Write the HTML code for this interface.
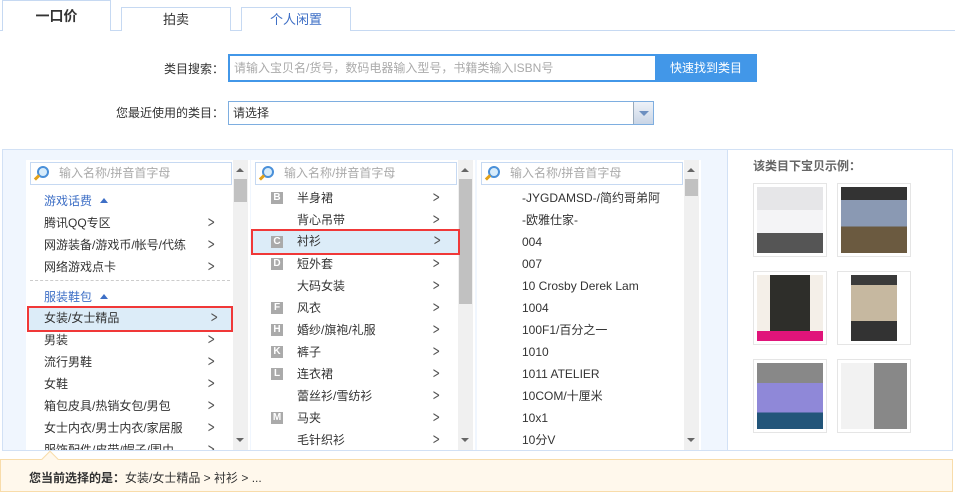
<!DOCTYPE html>
<html><head><meta charset="utf-8"><style>
*{margin:0;padding:0;box-sizing:border-box}
body{width:955px;height:492px;overflow:hidden;background:#fff;font-family:"Liberation Sans","Noto Sans CJK SC",sans-serif;font-size:12px;color:#333;position:relative}
.a{position:absolute}
.tab{position:absolute;border:1px solid #c6d9f2;border-bottom:none;background:#fff;text-align:center;font-size:13px}
.lbl{position:absolute;text-align:right;font-size:12px;color:#333}
.col{position:absolute;top:160px;width:224px;height:290px;background:#fff;overflow:hidden}
.sb{position:absolute;left:4px;top:2px;width:202px;height:23px;border:1px solid #c6d9f2;background:#fff;color:#aaa;font-size:12px;line-height:21px;padding-left:28px}
.sb i{position:absolute;left:6px;top:3px;width:12px;height:12px;border:2px solid #4a90d9;border-radius:50%;background:#d7ecfb}
.sb b{position:absolute;left:3px;top:13px;width:6px;height:3px;background:#e3a21a;transform:rotate(-45deg)}
.scr{position:absolute;right:2px;top:0;width:15px;height:290px;background:#f0f0f0}
.scr .t{position:absolute;left:1px;top:19px;width:13px;background:#c1c1c1}
.up{position:absolute;left:3px;top:8px;border:4px solid transparent;border-bottom:4px solid #666;border-top:none}
.dn{position:absolute;left:3px;bottom:8px;border:4px solid transparent;border-top:4px solid #666;border-bottom:none}
.r{position:absolute;left:0;width:205px;height:22px;line-height:22px;font-size:12px;color:#333}
.r .ar{position:absolute;right:13px;top:0;color:#555;font-family:"DejaVu Sans",sans-serif;font-size:15px;transform:scaleX(.6);line-height:21px}
.r .bd{position:absolute;left:20px;top:5px;width:12px;height:12px;background:#aaa;color:#fff;font-size:10px;line-height:12px;text-align:center;font-weight:bold}
.h{color:#3e6fc6}
.h:after{content:"";display:inline-block;margin-left:8px;vertical-align:2px;border:4px solid transparent;border-bottom:5px solid #3e6fc6;border-top:none}
.sel{background:#dcecf8;outline:2px solid #f03838;outline-offset:-1px}
.img{position:absolute;width:74px;height:74px;border:1px solid #e5e5e5;padding:3px;background:#fff}
.img div{width:100%;height:100%}
</style></head><body>
<div class="a" style="left:0;top:30px;width:955px;height:1px;background:#c6d9f2"></div>
<div class="tab" style="left:2px;top:0;width:109px;height:31px;line-height:30px;font-weight:bold;font-size:14px">一口价</div>
<div class="tab" style="left:121px;top:7px;width:110px;height:24px;line-height:24px">拍卖</div>
<div class="tab" style="left:241px;top:7px;width:110px;height:24px;line-height:24px;color:#3e6fc6">个人闲置</div>

<div class="lbl" style="left:100px;top:60px;width:124px">类目搜索：</div>
<div class="a" style="left:228px;top:54px;width:429px;height:28px;border:2px solid #4297e8;background:#fff;color:#aaa;line-height:24px;padding-left:4px">请输入宝贝名/货号，数码电器输入型号，书籍类输入ISBN号</div>
<div class="a" style="left:655px;top:54px;width:102px;height:28px;background:#4297e8;color:#fff;line-height:28px;text-align:center">快速找到类目</div>

<div class="lbl" style="left:80px;top:104px;width:144px">您最近使用的类目：</div>
<div class="a" style="left:228px;top:101px;width:426px;height:24px;border:1px solid #7eaee0;background:#fff;line-height:22px;padding-left:4px">请选择</div>
<div class="a" style="left:633px;top:102px;width:20px;height:22px;background:linear-gradient(#eef2f8,#c9d5e6);border-left:1px solid #9ab">
<div class="a" style="left:5px;top:9px;border:5px solid transparent;border-top:5px solid #6c8fc0;border-bottom:none"></div></div>

<div class="a" style="left:2px;top:149px;width:951px;height:302px;background:#f0f6fe;border:1px solid #d2e1f5"></div>
<div class="a" style="left:727px;top:150px;width:225px;height:300px;background:#fff;border-left:1px solid #d2e1f5"></div>

<!-- col1 -->
<div class="col" style="left:26px">
<div class="sb"><i></i><b></b>输入名称/拼音首字母</div>
<div class="scr"><div class="up"></div><div class="t" style="height:23px"></div><div class="dn"></div></div>
<div class="r h" style="top:30px;padding-left:18px">游戏话费</div>
<div class="r" style="top:52px;padding-left:18px">腾讯QQ专区<span class="ar">&gt;</span></div>
<div class="r" style="top:74px;padding-left:18px">网游装备/游戏币/帐号/代练<span class="ar">&gt;</span></div>
<div class="r" style="top:96px;padding-left:18px">网络游戏点卡<span class="ar">&gt;</span></div>
<div class="a" style="left:4px;top:120px;width:200px;border-top:1px dashed #ccc"></div>
<div class="r h" style="top:126px;padding-left:18px">服装鞋包</div>
<div class="r sel" style="top:147px;left:2px;width:204px;padding-left:16px;height:24px">女装/女士精品<span class="ar" style="right:11px">&gt;</span></div>
<div class="r" style="top:169px;padding-left:18px">男装<span class="ar">&gt;</span></div>
<div class="r" style="top:191px;padding-left:18px">流行男鞋<span class="ar">&gt;</span></div>
<div class="r" style="top:213px;padding-left:18px">女鞋<span class="ar">&gt;</span></div>
<div class="r" style="top:235px;padding-left:18px">箱包皮具/热销女包/男包<span class="ar">&gt;</span></div>
<div class="r" style="top:257px;padding-left:18px">女士内衣/男士内衣/家居服<span class="ar">&gt;</span></div>
<div class="r" style="top:279px;padding-left:18px">服饰配件/皮带/帽子/围巾<span class="ar">&gt;</span></div>
</div>

<!-- col2 -->
<div class="col" style="left:251px">
<div class="sb"><i></i><b></b>输入名称/拼音首字母</div>
<div class="scr"><div class="up"></div><div class="t" style="height:125px"></div><div class="dn"></div></div>
<div class="r" style="top:27px;padding-left:46px"><span class="bd">B</span>半身裙<span class="ar">&gt;</span></div>
<div class="r" style="top:49px;padding-left:46px">背心吊带<span class="ar">&gt;</span></div>
<div class="r sel" style="top:70px;left:1px;width:207px;padding-left:45px;height:24px"><span class="bd" style="left:19px;top:6px">C</span>衬衫<span class="ar" style="right:15px">&gt;</span></div>
<div class="r" style="top:93px;padding-left:46px"><span class="bd">D</span>短外套<span class="ar">&gt;</span></div>
<div class="r" style="top:115px;padding-left:46px">大码女装<span class="ar">&gt;</span></div>
<div class="r" style="top:137px;padding-left:46px"><span class="bd">F</span>风衣<span class="ar">&gt;</span></div>
<div class="r" style="top:159px;padding-left:46px"><span class="bd">H</span>婚纱/旗袍/礼服<span class="ar">&gt;</span></div>
<div class="r" style="top:181px;padding-left:46px"><span class="bd">K</span>裤子<span class="ar">&gt;</span></div>
<div class="r" style="top:203px;padding-left:46px"><span class="bd">L</span>连衣裙<span class="ar">&gt;</span></div>
<div class="r" style="top:225px;padding-left:46px">蕾丝衫/雪纺衫<span class="ar">&gt;</span></div>
<div class="r" style="top:247px;padding-left:46px"><span class="bd">M</span>马夹<span class="ar">&gt;</span></div>
<div class="r" style="top:269px;padding-left:46px">毛针织衫<span class="ar">&gt;</span></div>
</div>

<!-- col3 -->
<div class="col" style="left:477px">
<div class="sb"><i></i><b></b>输入名称/拼音首字母</div>
<div class="scr"><div class="up"></div><div class="t" style="height:17px"></div><div class="dn"></div></div>
<div class="r" style="top:27px;padding-left:45px">-JYGDAMSD-/简约哥弟阿</div>
<div class="r" style="top:49px;padding-left:45px">-欧雅仕家-</div>
<div class="r" style="top:71px;padding-left:45px">004</div>
<div class="r" style="top:93px;padding-left:45px">007</div>
<div class="r" style="top:115px;padding-left:45px">10 Crosby Derek Lam</div>
<div class="r" style="top:137px;padding-left:45px">1004</div>
<div class="r" style="top:159px;padding-left:45px">100F1/百分之一</div>
<div class="r" style="top:181px;padding-left:45px">1010</div>
<div class="r" style="top:203px;padding-left:45px">1011 ATELIER</div>
<div class="r" style="top:225px;padding-left:45px">10COM/十厘米</div>
<div class="r" style="top:247px;padding-left:45px">10x1</div>
<div class="r" style="top:269px;padding-left:45px">10分V</div>
</div>

<div class="a" style="left:753px;top:157px;font-weight:bold;color:#666;font-size:12px">该类目下宝贝示例：</div>
<div class="img" style="left:753px;top:183px"><div style="background:linear-gradient(#e6e6e8 0 35%,#f4f4f6 35% 70%,#555 70%)"></div></div>
<div class="img" style="left:837px;top:183px"><div style="background:linear-gradient(#333 0 20%,#8a99b3 20% 60%,#6b5a40 60%)"></div></div>
<div class="img" style="left:753px;top:271px"><div style="background:linear-gradient(90deg,#f4efe8 0 20%,#2e2e2a 20% 80%,#f4efe8 80%);border-bottom:10px solid #e0147a"></div></div>
<div class="img" style="left:837px;top:271px"><div style="margin:0 10px;width:46px;background:linear-gradient(#3a3a3a 0 15%,#c6b8a0 15% 70%,#333 70%)"></div></div>
<div class="img" style="left:753px;top:359px"><div style="background:linear-gradient(#888 0 30%,#8f88d8 30% 75%,#22557a 75%)"></div></div>
<div class="img" style="left:837px;top:359px"><div style="background:linear-gradient(90deg,#f2f2f2 0 50%,#888 50%)"></div></div>

<div class="a" style="left:0;top:459px;width:953px;height:33px;background:#fff8ec;border:1px solid #f8dcaa"></div>
<div class="a" style="left:44px;top:453px;width:12px;height:12px;background:#fff8ec;border-left:1px solid #f8dcaa;border-top:1px solid #f8dcaa;transform:rotate(45deg)"></div>
<div class="a" style="left:29px;top:469px;font-size:12px"><b>您当前选择的是：</b>女装/女士精品 &gt; 衬衫 &gt; ...</div>
</body></html>
